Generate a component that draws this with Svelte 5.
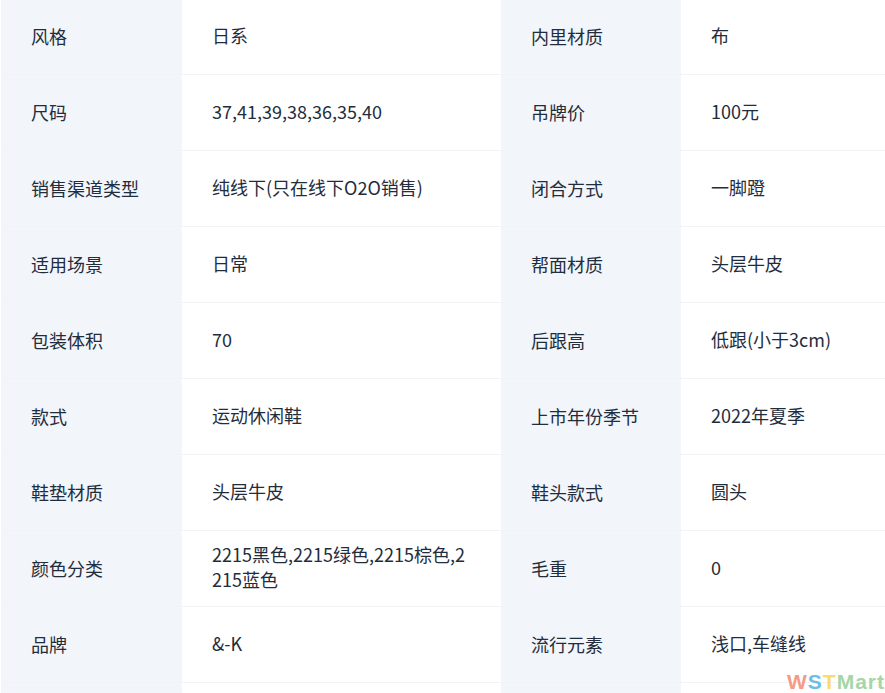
<script lang="ts">
	const rows = [
		['风格', '日系', '内里材质', '布'],
		['尺码', '37,41,39,38,36,35,40', '吊牌价', '100元'],
		['销售渠道类型', '纯线下(只在线下O2O销售)', '闭合方式', '一脚蹬'],
		['适用场景', '日常', '帮面材质', '头层牛皮'],
		['包装体积', '70', '后跟高', '低跟(小于3cm)'],
		['款式', '运动休闲鞋', '上市年份季节', '2022年夏季'],
		['鞋垫材质', '头层牛皮', '鞋头款式', '圆头'],
		['颜色分类', '2215黑色,2215绿色,2215棕色,2215蓝色', '毛重', '0'],
		['品牌', '&-K', '流行元素', '浅口,车缝线'],
		['', '', '', '']
	];
</script>

<div class="page">
	<div class="table">
		{#each rows as row}
			<div class="cell label">{row[0]}</div>
			<div class="cell value">{row[1]}</div>
			<div class="cell label">{row[2]}</div>
			<div class="cell value">{row[3]}</div>
		{/each}
	</div>
	<div class="watermark"><span class="w">W</span><span class="s">S</span><span class="t">T</span><span class="m">Mart</span></div>
</div>

<style>
	:global(body) {
		margin: 0;
		background: #fff;
	}

	.page {
		position: relative;
		width: 885px;
		height: 693px;
		overflow: hidden;
		font-family: 'Noto Sans CJK SC', 'Open Sans', sans-serif;
	}

	.table {
		display: grid;
		grid-template-columns: 181px 319px 180px 204px;
		grid-auto-rows: 76px;
		margin-top: -1px;
		margin-left: 1px;
	}

	.cell {
		display: flex;
		align-items: center;
		box-sizing: border-box;
		padding: 0 30px;
		border-bottom: 1px solid #f2f3f5;
		font-size: 18px;
		line-height: 25px;
		color: #1f2d3d;
		word-break: break-all;
	}

	.label {
		background: #f2f5f9;
		border-bottom-color: #f0f3f7;
	}

	.value {
		padding-bottom: 3px;
	}

	.watermark {
		position: absolute;
		right: 0;
		bottom: 0;
		font-family: 'Liberation Sans', sans-serif;
		font-size: 21px;
		font-weight: 700;
		line-height: 22px;
		letter-spacing: 1px;
	}

	.w { color: #f59a86; }
	.s { color: #6cbde8; }
	.t { color: #fbd96b; }
	.m { color: #a5d6a7; }
</style>
